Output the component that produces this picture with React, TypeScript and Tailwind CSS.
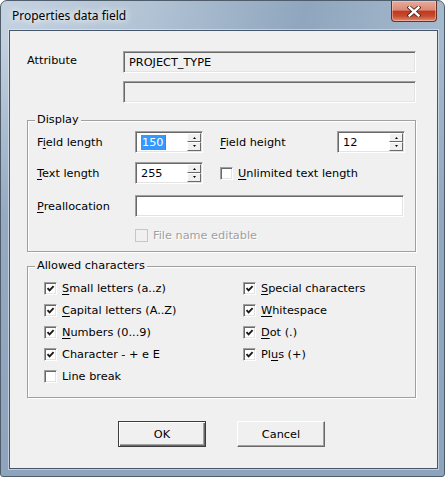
import type { ReactNode } from 'react';

const sunken =
  'border border-t-[#a0a0a0] border-l-[#a0a0a0] border-b-white border-r-white shadow-[inset_1px_1px_0_#696969,inset_-1px_-1px_0_#e3e3e3]';

const Key = ({ children }: { children: ReactNode }) => <span className="underline underline-offset-2">{children}</span>;

const CheckBox = ({ checked = false, disabled = false }: { checked?: boolean; disabled?: boolean }) => (
  <span
    className={`flex h-[13px] w-[13px] shrink-0 items-center justify-center ${
      disabled
        ? 'border border-[#c6c6c6] bg-[#f0f0f0]'
        : 'border border-t-[#a0a0a0] border-l-[#a0a0a0] border-b-white border-r-white bg-white shadow-[inset_1px_1px_0_#696969,inset_-1px_-1px_0_#e3e3e3]'
    }`}
  >
    {checked && (
      <svg width="9" height="9" viewBox="0 0 9 9">
        <path d="M1.5 4.2 L3.6 6.4 L7.6 2.2" fill="none" stroke="#1a1a1a" strokeWidth="1.9" />
      </svg>
    )}
  </span>
);

const Option = ({ checked, children }: { checked?: boolean; children: ReactNode }) => (
  <div className="flex h-[22px] items-center gap-[5px]">
    <CheckBox checked={checked} />
    <span>{children}</span>
  </div>
);

const SpinButton = ({ up }: { up?: boolean }) => (
  <div className="flex h-[9px] w-[14px] items-center justify-center border border-t-white border-l-white border-b-[#696969] border-r-[#696969] bg-[#f0f0f0]">
    <svg width="5" height="3" viewBox="0 0 5 3">
      <polygon points={up ? '1,3 2.5,1 4,3' : '1,0 2.5,2 4,0'} fill="#000" />
    </svg>
  </div>
);

const SpinBox = ({ value, selected }: { value: string; selected?: boolean }) => (
  <div className={`flex h-[22px] w-[68px] items-center bg-white pl-[5px] pr-[1px] ${sunken}`}>
    <div className="flex flex-1 items-center">
      {selected ? (
        <>
          <span className="bg-[#3399ff] px-px leading-[15px] text-white">{value}</span>
          <span className="h-[15px] w-px bg-[#c8641e]" />
        </>
      ) : (
        <span>{value}</span>
      )}
    </div>
    <div className="flex flex-col">
      <SpinButton up />
      <SpinButton />
    </div>
  </div>
);

const Group = ({ title, children }: { title: string; children: ReactNode }) => (
  <div className="relative ml-[17px] h-[132px] w-[389px] border border-[#a0a0a0] shadow-[inset_1px_1px_0_#fff,1px_1px_0_#fff]">
    <span className="absolute left-[7px] top-[-8px] bg-[#f0f0f0] px-[2px] leading-[13px]">{title}</span>
    {children}
  </div>
);

export default function App() {
  return (
    <div className="h-[477px] w-[445px] rounded-t-[7px] rounded-b-[3px] border border-[#4f5c6b] bg-[linear-gradient(180deg,rgba(142,164,188,0)_0%,rgba(142,164,188,0)_8%,rgba(142,164,188,0.85)_45%,#8ea4bc_100%),linear-gradient(100deg,#c4d2e0_0%,#b2c3d5_28%,#8fa6be_58%,#a3b7cb_82%,#b2c3d4_100%)] font-['DejaVu_Sans',sans-serif] text-[11.3px] leading-[13px] text-black">
      <div className="relative flex h-[29px] items-start">
        <span className="ml-[11px] mt-[7px] font-['Noto_Sans',sans-serif] text-[12px] leading-[16px] text-black [text-shadow:0_0_6px_#fff,0_0_10px_#fff]">
          Properties data field
        </span>
        <div className="absolute right-[7px] top-0 flex h-[21px] w-[46px] items-center justify-center rounded-b-[4px] border border-t-0 border-[#6b2f25] bg-[linear-gradient(180deg,#e9aa9c_0%,#d98a77_45%,#c1391d_52%,#c84a2e_75%,#e08b6f_100%)] shadow-[inset_0_0_0_1px_rgba(255,220,210,0.45)]">
          <svg width="14" height="11" viewBox="0 0 14 11">
            <path d="M2.5 1.5 L11.5 9.5 M11.5 1.5 L2.5 9.5" stroke="#4a1d16" strokeWidth="4" strokeLinecap="square" />
            <path d="M2.5 1.5 L11.5 9.5 M11.5 1.5 L2.5 9.5" stroke="#fff" strokeWidth="2.4" strokeLinecap="square" />
          </svg>
        </div>
      </div>

      <div className="ml-[8px] mr-[6px] h-[439px] border border-[#45566a] bg-[#f0f0f0] shadow-[0_0_0_1px_rgba(230,238,246,0.55)]">
        <div className="ml-[17px] mt-[20px] flex items-start">
          <span className="w-[96px] pt-[3px]">Attribute</span>
          <div className={`flex h-[22px] w-[293px] items-center bg-[#f0f0f0] pl-[5px] ${sunken}`}>PROJECT_TYPE</div>
        </div>
        <div className={`ml-[113px] mt-[8px] h-[22px] w-[293px] bg-[#f0f0f0] ${sunken}`} />

        <div className="mt-[17px]">
          <Group title="Display">
            <div className="flex flex-col pl-[9px] pt-[10px]">
              <div className="flex h-[22px] items-center">
                <span className="w-[98px]">
                  F<Key>i</Key>eld length
                </span>
                <SpinBox value="150" selected />
                <span className="ml-[17px] w-[117px]">
                  <Key>F</Key>ield height
                </span>
                <SpinBox value="12" />
              </div>
              <div className="mt-[9px] flex h-[22px] items-center">
                <span className="w-[98px]">
                  <Key>T</Key>ext length
                </span>
                <SpinBox value="255" />
                <div className="ml-[17px] flex items-center gap-[5px]">
                  <CheckBox />
                  <span>
                    <Key>U</Key>nlimited text length
                  </span>
                </div>
              </div>
              <div className="mt-[11px] flex h-[22px] items-center">
                <span className="w-[98px]">
                  <Key>P</Key>reallocation
                </span>
                <div className={`h-[22px] w-[269px] bg-white ${sunken}`} />
              </div>
              <div className="ml-[98px] mt-[12px] flex items-center gap-[5px]">
                <CheckBox disabled />
                <span className="text-[#a0a0a0] [text-shadow:1px_1px_0_#fff]">File name editable</span>
              </div>
            </div>
          </Group>
        </div>

        <div className="mt-[14px]">
          <Group title="Allowed characters">
            <div className="flex pl-[16px] pt-[10px]">
              <div className="flex w-[199px] flex-col">
                <Option checked>
                  <Key>S</Key>mall letters (a..z)
                </Option>
                <Option checked>
                  <Key>C</Key>apital letters (A..Z)
                </Option>
                <Option checked>
                  <Key>N</Key>umbers (0...9)
                </Option>
                <Option checked>Character - + e E</Option>
                <Option>Line break</Option>
              </div>
              <div className="flex flex-col">
                <Option checked>
                  <Key>S</Key>pecial characters
                </Option>
                <Option checked>
                  <Key>W</Key>hitespace
                </Option>
                <Option checked>
                  <Key>D</Key>ot (.)
                </Option>
                <Option checked>
                  Pl<Key>u</Key>s (+)
                </Option>
              </div>
            </div>
          </Group>
        </div>

        <div className="ml-[108px] mt-[23px] flex gap-[31px]">
          <button className="flex h-[26px] w-[88px] items-center justify-center border border-[#3c3c3c] bg-[#f0f0f0] shadow-[inset_1px_1px_0_#fff,inset_-1px_-1px_0_#696969,inset_-2px_-2px_0_#a0a0a0]">
            OK
          </button>
          <button className="flex h-[26px] w-[88px] items-center justify-center border border-t-white border-l-white border-b-[#696969] border-r-[#696969] bg-[#f0f0f0] shadow-[inset_-1px_-1px_0_#a0a0a0]">
            Cancel
          </button>
        </div>
      </div>
    </div>
  );
}
